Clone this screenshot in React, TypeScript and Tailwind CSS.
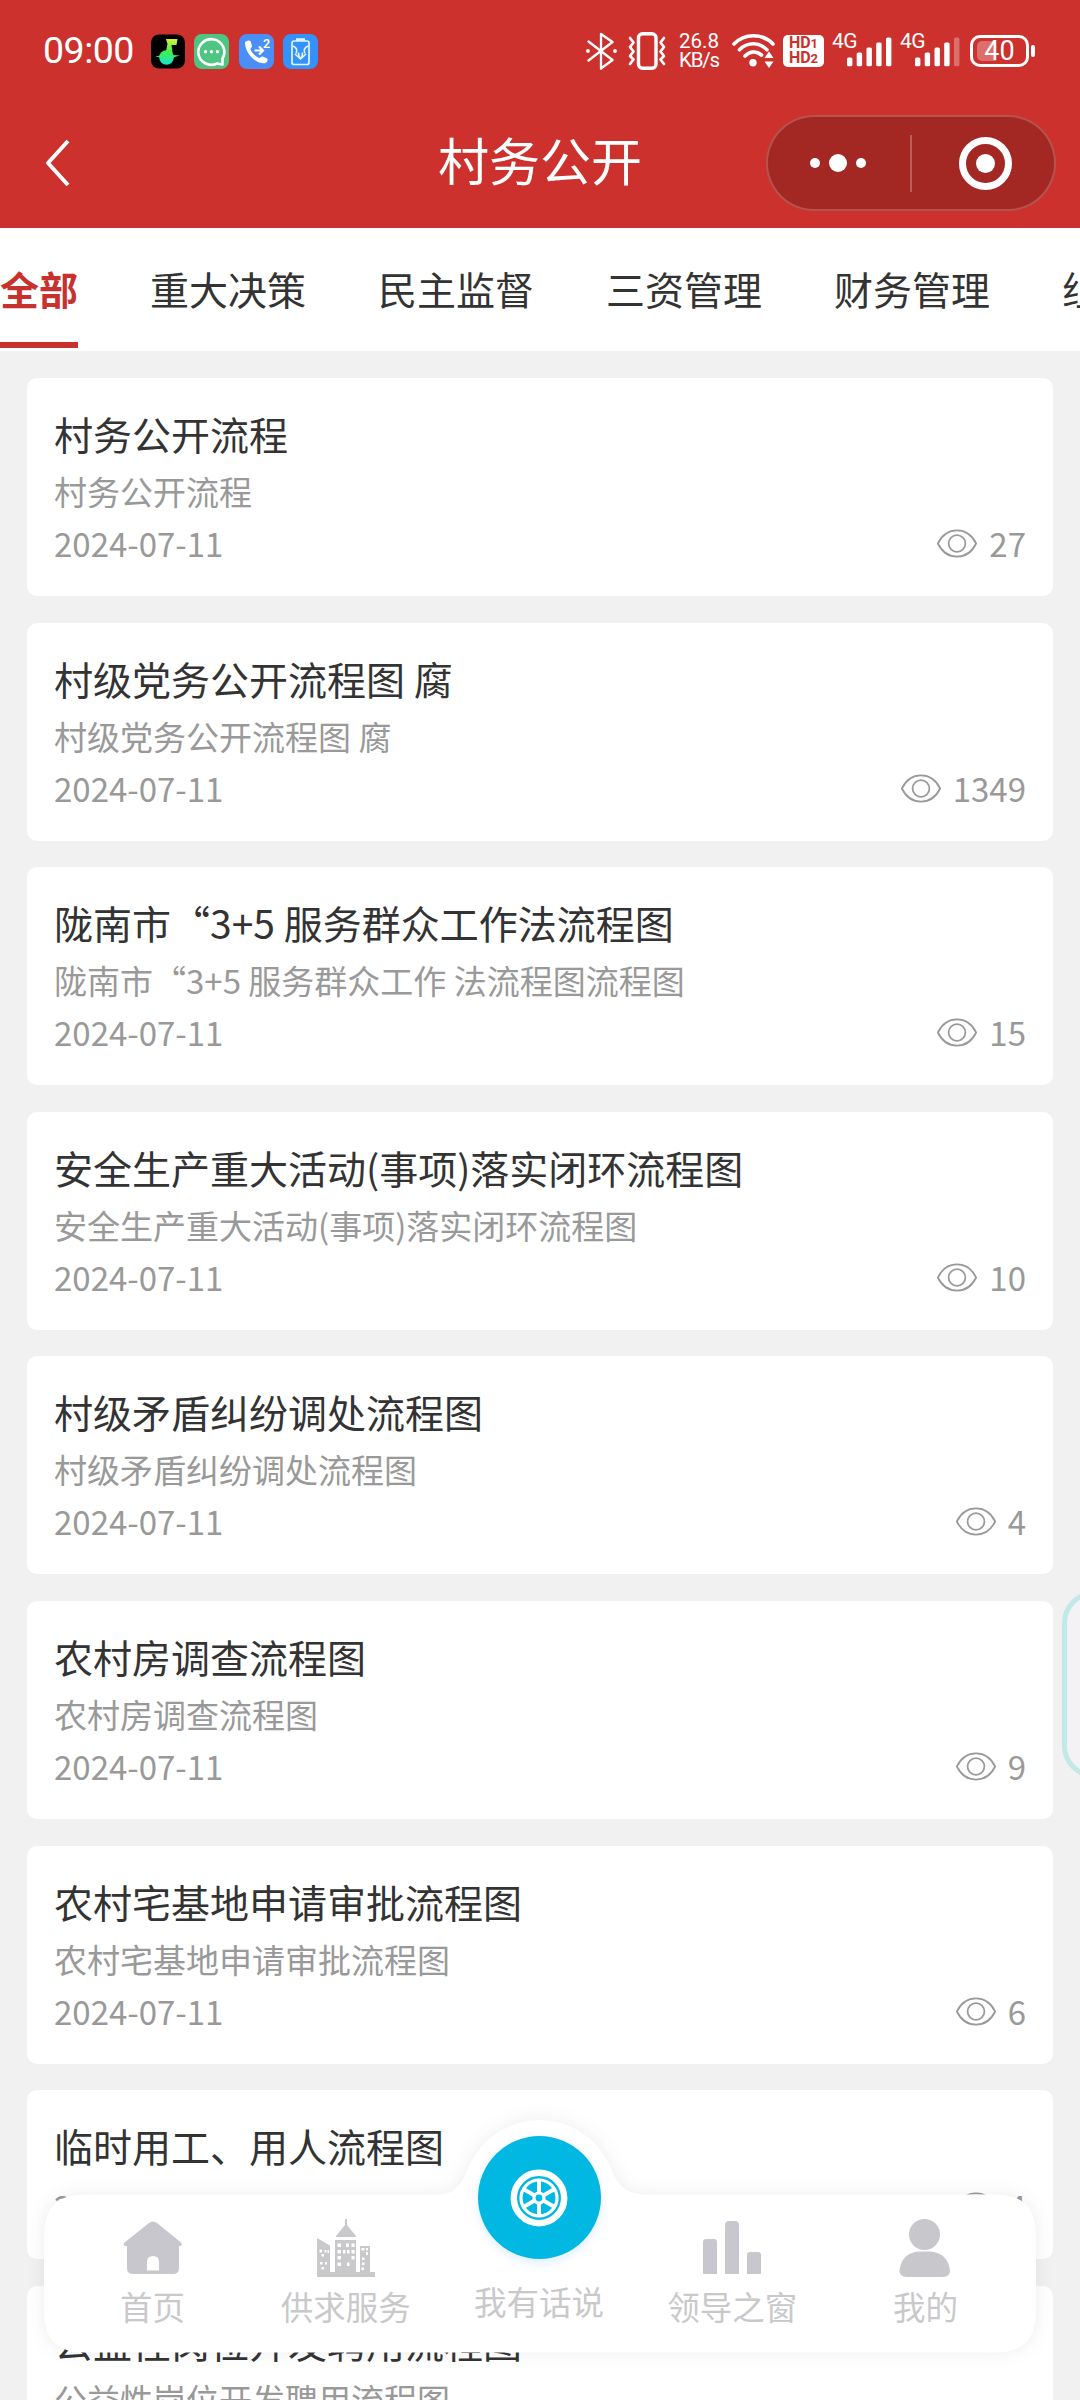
import React from "react";

type Item = { title: string; summary?: string; date: string; views: number };

const TABS = ["全部", "重大决策", "民主监督", "三资管理", "财务管理", "组织建设"];

const ITEMS: Item[] = [
  { title: "村务公开流程", summary: "村务公开流程", date: "2024-07-11", views: 27 },
  { title: "村级党务公开流程图 腐", summary: "村级党务公开流程图 腐", date: "2024-07-11", views: 1349 },
  { title: "陇南市“3+5 服务群众工作法流程图", summary: "陇南市“3+5 服务群众工作 法流程图流程图", date: "2024-07-11", views: 15 },
  { title: "安全生产重大活动(事项)落实闭环流程图", summary: "安全生产重大活动(事项)落实闭环流程图", date: "2024-07-11", views: 10 },
  { title: "村级矛盾纠纷调处流程图", summary: "村级矛盾纠纷调处流程图", date: "2024-07-11", views: 4 },
  { title: "农村房调查流程图", summary: "农村房调查流程图", date: "2024-07-11", views: 9 },
  { title: "农村宅基地申请审批流程图", summary: "农村宅基地申请审批流程图", date: "2024-07-11", views: 6 },
  { title: "临时用工、用人流程图", date: "2024-07-11", views: 4 },
  { title: "公益性岗位开发聘用流程图", summary: "公益性岗位开发聘用流程图", date: "2024-07-11", views: 5 },
];

function MusicIcon() {
  return (
    <svg width="34" height="35" viewBox="0 0 34 35">
      <defs>
        <linearGradient id="note" gradientUnits="userSpaceOnUse" x1="0" y1="5" x2="0" y2="31">
          <stop offset="0" stopColor="#d8f53a" />
          <stop offset="0.5" stopColor="#3df04a" />
          <stop offset="1" stopColor="#16e6d6" />
        </linearGradient>
      </defs>
      <rect y="0.5" width="34" height="34" rx="8" fill="#000" />
      <g fill="url(#note)">
        <path d="M15 5H26.500L25.500 11H20.500L22 22H14L16.500 10z" />
        <circle cx="15.500" cy="23.500" r="7.300" />
        <path d="M4 22.500L12 21H22L29 21.500L22 23.500H10z" />
      </g>
    </svg>
  );
}

function ChatIcon() {
  return (
    <svg width="35" height="35" viewBox="0 0 35 35">
      <rect width="35" height="35" rx="8" fill="#4fc582" />
      <path d="M28.500 24.500A13 12.800 0 1 0 23 29.500l5.500 1z" fill="none" stroke="#fff" strokeWidth="2.600" strokeLinejoin="round" />
      <g fill="#fff">
        <circle cx="11.500" cy="17.800" r="1.700" />
        <circle cx="17.500" cy="17.800" r="1.700" />
        <circle cx="23.500" cy="17.800" r="1.700" />
      </g>
    </svg>
  );
}

function CallIcon() {
  return (
    <svg width="35" height="35" viewBox="0 0 35 35">
      <rect width="35" height="35" rx="8" fill="#4a8ff8" />
      <path d="M6 8.500c0-1.500 4.500-3 5.500-1.500l1.500 5c.2 1-2 2.500-1.500 3.500 1.500 3.500 5 7 8.500 8.500 1 .4 2.500-2 3.700-1.500l4.500 2c1 .6 0 4-1.500 4.500C17 31 6 19 6 8.500z" fill="#fff" />
      <path d="M15.500 16.500h8M20 12.500l4 4-4 4" fill="none" stroke="#fff" strokeWidth="2.200" />
      <text x="24" y="13.500" fill="#fff" fontSize="12.500" fontWeight="600" fontFamily="Roboto, sans-serif">2</text>
    </svg>
  );
}

function BatteryAppIcon() {
  return (
    <svg width="35" height="35" viewBox="0 0 35 35">
      <rect width="35" height="35" rx="8" fill="#3492fb" />
      <rect x="9" y="7" width="17" height="23.500" rx="2" fill="none" stroke="#e3f4ff" strokeWidth="1.700" />
      <path d="M13 5.500h9" stroke="#e3f4ff" strokeWidth="2.500" />
      <path d="M10 12q5.500 2.500 3 7.500M25 12q-5.500 2.500-3 7.500M17.500 24.500q-2-1.500-2-6M17.500 24.500q2-1.500 2-6M12 20l5.500 5 5.500-5" fill="none" stroke="#e3f4ff" strokeWidth="1.600" />
    </svg>
  );
}

function BluetoothIcon() {
  return (
    <svg width="31" height="38" viewBox="0 0 31 38">
      <path d="M2.500 9.500l24 18.500-11.500 8.500V2l11.500 8-24 18.500" fill="none" stroke="#fff" strokeWidth="2.300" strokeLinejoin="round" strokeLinecap="round" />
      <circle cx="1.900" cy="19" r="1.900" fill="#fff" />
      <circle cx="29" cy="19" r="1.900" fill="#fff" />
    </svg>
  );
}

function VibrateIcon() {
  return (
    <svg width="38" height="38" viewBox="0 0 38 38">
      <rect x="10.500" y="1.700" width="17.500" height="34.500" rx="4" fill="none" stroke="#fff" strokeWidth="3.400" />
      <path d="M2 6l3.500 4.500L2 15l3.500 4.500L2 24l3.500 3.500L2 32M36 6l-3.500 4.500L36 15l-3.500 4.500L36 24l-3.500 3.500L36 32" fill="none" stroke="#fff" strokeWidth="2.700" strokeLinejoin="round" strokeLinecap="round" />
    </svg>
  );
}

function WifiIcon() {
  return (
    <svg width="43" height="36" viewBox="0 0 43 36">
      <g fill="none" stroke="#fff" strokeWidth="3.600" strokeLinecap="round">
        <path d="M2 11c10.500-11 28.500-11 39 0" />
        <path d="M7.500 16.800c8-8 19.500-8 27.500 0" />
        <path d="M13 23c5-5.200 11.500-5.200 16.500-1" />
      </g>
      <circle cx="21" cy="29.800" r="3.700" fill="#fff" />
      <path d="M37 18.500l4.500 6.500h-9zM37 35l4.500-6.500h-9z" fill="#fff" />
    </svg>
  );
}

function HdIcon() {
  return (
    <div className="flex h-[32px] w-[41px] flex-col items-center justify-center rounded-[5px] bg-white text-[16px] leading-[14px] font-bold text-[#cc312d]">
      <span>HD<span className="text-[13px]">1</span></span>
      <span>HD<span className="text-[13px]">2</span></span>
    </div>
  );
}

function Signal({ weak }: { weak?: boolean }) {
  return (
    <div className="relative h-[34px] w-[60px]">
      <span className="absolute top-0 left-0 text-[21px] leading-[15px] tracking-[-0.5px] text-white">4G</span>
      <svg width="60" height="34" viewBox="0 0 60 34" className="text-white" fill="currentColor">
        <rect x="15" y="23.500" width="5.400" height="8.800" rx="1.500" />
        <rect x="24.700" y="18.500" width="5.400" height="13.800" rx="1.500" />
        <rect x="34.500" y="13.500" width="5.400" height="18.800" rx="1.500" />
        <rect x="44.200" y="8.500" width="5.400" height="23.800" rx="1.500" />
        <rect x="54" y="3.500" width="5.400" height="28.800" rx="1.500" opacity={weak ? 0.3 : 1} />
      </svg>
    </div>
  );
}

function BatteryIcon() {
  return (
    <div className="flex items-center gap-[2px]">
      <div className="relative flex h-[32px] w-[59px] items-center justify-center rounded-[10px] border-[3px] border-white">
        <div className="absolute top-[3px] bottom-[3px] left-[4px] w-[19px] rounded-l-[5px] bg-white/30" />
        <span className="relative text-[27px] leading-none text-white">40</span>
      </div>
      <div className="h-[12px] w-[4px] rounded-full bg-white" />
    </div>
  );
}

function StatusBar() {
  return (
    <div className="flex h-[102px] items-center justify-between pr-[45px] pl-[43px] font-[Roboto,sans-serif]">
      <div className="flex items-center">
        <span className="w-[108px] text-[37.500px] leading-none tracking-[-0.500px] text-white">09:00</span>
        <div className="flex gap-[9.300px]">
          <MusicIcon />
          <ChatIcon />
          <CallIcon />
          <BatteryAppIcon />
        </div>
      </div>
      <div className="flex items-center">
        <BluetoothIcon />
        <div className="w-[11px]" />
        <VibrateIcon />
        <div className="w-[13px]" />
        <div className="w-[53px] text-[20.500px] leading-[19px] text-white">
          <div>26.8</div>
          <div className="tracking-[-1.200px]">KB/s</div>
        </div>
        <WifiIcon />
        <div className="w-[8px]" />
        <HdIcon />
        <div className="w-[8px]" />
        <Signal />
        <div className="w-[8px]" />
        <Signal weak />
        <div className="w-[10px]" />
        <BatteryIcon />
      </div>
    </div>
  );
}

function NavBar() {
  return (
    <div className="relative flex h-[122px] items-center justify-between pr-[24px] pl-[44px]">
      <svg width="28" height="48" viewBox="0 0 28 48">
        <path d="M24 2L4 24l20 22" fill="none" stroke="#fff" strokeWidth="4" strokeLinejoin="round" />
      </svg>
      <h1 className="absolute inset-x-0 top-[21px] text-center text-[51px] leading-[73px] text-white">村务公开</h1>
      <div className="flex h-[96px] w-[290px] items-center rounded-full border-2 border-white/20 bg-[#a32823]">
        <div className="flex w-[140px] items-center justify-center gap-[9px]">
          <span className="size-[10px] rounded-full bg-white" />
          <span className="size-[18px] rounded-full bg-white" />
          <span className="size-[10px] rounded-full bg-white" />
        </div>
        <div className="ml-[2px] h-[57px] w-[2px] bg-white/25" />
        <div className="flex flex-1 justify-center pl-[4px]">
          <span className="flex size-[53px] items-center justify-center rounded-full border-[7px] border-white">
            <span className="size-[19px] rounded-full bg-white" />
          </span>
        </div>
      </div>
    </div>
  );
}

function TabBar() {
  return (
    <div className="flex h-[123px] gap-[72px] overflow-hidden bg-white pb-[3px] text-[39px] text-[#333]">
      {TABS.map((t, i) =>
        i === 0 ? (
          <div key={t} className="flex shrink-0 items-center border-b-[6px] border-[#c7322f] pt-[6px] font-bold text-[#c7322f]">
            {t}
          </div>
        ) : (
          <div key={t} className="flex shrink-0 items-center">{t}</div>
        ),
      )}
    </div>
  );
}

function EyeIcon() {
  return (
    <svg width="42" height="29" viewBox="0 0 42 30" fill="none" stroke="#999" strokeWidth="1.800">
      <path d="M1.200 15C10-3 32-3 40.800 15 32 33 10 33 1.200 15z" strokeLinejoin="round" />
      <circle cx="21" cy="15" r="8.700" />
    </svg>
  );
}

function Card({ item }: { item: Item }) {
  return (
    <div className="flex flex-col rounded-[10px] bg-white px-[27px] pt-[27px] pb-[27px]">
      <div className="h-[56px] text-[39px] leading-[56px] whitespace-nowrap text-[#333]">{item.title}</div>
      {item.summary && (
        <div className="mt-[8px] h-[41px] text-[33px] leading-[44px] whitespace-nowrap text-[#999]">{item.summary}</div>
      )}
      <div className="mt-[8px] flex h-[51px] items-center justify-between text-[33px] leading-[51px] text-[#999]">
        <span>{item.date}</span>
        <span className="flex items-center gap-[11px]">
          <EyeIcon />
          {item.views}
        </span>
      </div>
    </div>
  );
}

function HomeIcon() {
  return (
    <svg width="60" height="54" viewBox="0 0 60 54">
      <path fillRule="evenodd" d="M26 2Q30-1 34 2L58 21.500q2 3-1 3.500h-1v22q0 6-6 6H10q-6 0-6-6V25H2q-2.500-1-.5-3.500zM24 49.500h12V41q0-6-6-6t-6 6z" fill="#c8c7cd" />
    </svg>
  );
}

function CityIcon() {
  return (
    <svg width="58" height="58" viewBox="0 0 58 58">
      <path d="M28 0h2v6l9 11v1H19v-1l9-11zM0 19l13 7.500V53h5V21h21v32h4V27h10v26h5v5H0z" fill="#c9c9cb" />
      <g fill="#fff">
        <path d="M2.500 30.500h2.500v3H2.500zM7.500 31h2v2.500h-2zM10.500 31h1.500v3h-1.500zM4.500 35h2.500v2.500H4.500zM3 43h2.500v2.500H3zM8 43h2v2.500H8zM4.500 48h2.500v2.500H4.500z" />
        <path d="M20.500 24.500h3.500v3.500h-3.500zM29 24.500h3v3.500h-3zM34.500 24.500h3v3.500h-3zM20.500 31h3.500v3.500h-3.500zM26 31h2.500v3.500H26zM30 31h2.500v3.500H30zM34.500 31h3v3.500h-3zM20.500 37h3.500v3.500h-3.500zM34.500 37h3v3.500h-3zM20.500 43.500h3.500v3.500h-3.500zM30 43.500h2.500v3.500H30z" />
        <path d="M44.500 29h3v2.500h-3zM49 29h2v2.500h-2zM49 33h2v3h-2zM45 38.500h2.500v2.500H45zM45 43.500h2.500v2.500H45zM44.500 48.500h2.500v2.500h-2.500z" />
      </g>
    </svg>
  );
}

function BarsIcon() {
  return (
    <svg width="58" height="53" viewBox="0 0 58 53" fill="#c8c7cd">
      <path d="M0 53V21q0-3 3-3h8q3 0 3 3v32zM22 53V4q0-4 4-4h6q4 0 4 4v49zM44 53V34q0-3 3-3h8q3 0 3 3v19z" />
    </svg>
  );
}

function PersonIcon() {
  return (
    <svg width="52" height="58" viewBox="0 0 52 58" fill="#c8c7cc">
      <circle cx="25.500" cy="15.500" r="15.500" />
      <path d="M19 32.500h13q17 2 19 19 0 6.500-7 6.500H7.500Q.5 58 .5 51.500 2.500 34.500 19 32.500z" />
    </svg>
  );
}

function WheelIcon() {
  return (
    <svg width="58" height="58" viewBox="-29 -29 58 58" fill="none" stroke="#fff">
      <circle r="25.200" strokeWidth="6.500" />
      <circle r="18" strokeWidth="3.200" />
      <circle r="5" strokeWidth="3.200" />
      {[0, 60, 120, 180, 240, 300].map((a) => (
        <path key={a} d="M0-5.500V-17" strokeWidth="4" transform={`rotate(${a})`} />
      ))}
    </svg>
  );
}

function NavItem({ icon, label }: { icon: React.ReactNode; label: string }) {
  return (
    <div className="flex flex-1 flex-col items-center pt-[48.500px]">
      <div className="flex h-[58px] items-center">{icon}</div>
      <span className="mt-[6px] text-[32.500px] leading-[46px] text-[#c9c9cb]">{label}</span>
    </div>
  );
}

/* Floating bottom bar; the backdrop shape carries a rounded bump under the centre button. */
function BottomNav() {
  return (
    <nav className="absolute top-[2170px] left-[44px] w-[992px]">
      <svg width="992" height="260" viewBox="0 -50 992 260" className="absolute -top-[50px] left-0 overflow-visible drop-shadow-[0_0_9px_rgba(60,60,90,0.09)]">
        <path d="M40 24.500H396Q413 24 421 5 426-7 428-10A77 77 0 0 1 563-10Q565-7 570 5 578 24 600 24.500H952Q992 24.500 992 64.500V142.500Q992 182.500 952 182.500H40Q0 182.500 0 142.500V64.500Q0 24.500 40 24.500z" fill="#fff" />
      </svg>
      <div className="relative flex pr-[14px] pl-[12px]">
        <NavItem icon={<HomeIcon />} label="首页" />
        <NavItem icon={<CityIcon />} label="供求服务" />
        <div className="flex flex-1 flex-col items-center">
          <div className="-mt-[34px] flex size-[123px] items-center justify-center rounded-full bg-[#00b8e2] shadow-[0_4px_10px_rgba(0,120,255,0.13)]">
            <WheelIcon />
          </div>
          <span className="mt-[19px] text-[32.500px] leading-[46px] text-[#c9c9cb]">我有话说</span>
        </div>
        <NavItem icon={<BarsIcon />} label="领导之窗" />
        <NavItem icon={<PersonIcon />} label="我的" />
      </div>
    </nav>
  );
}

export default function App() {
  return (
    <div className="relative h-[2400px] w-[1080px] overflow-hidden bg-[#f1f1f1] font-['Noto_Sans_CJK_SC',sans-serif]">
      <header className="h-[228px] bg-[#cc312d]">
        <StatusBar />
        <NavBar />
      </header>
      <TabBar />
      <main className="flex flex-col gap-[26.600px] px-[27px] pt-[27px]">
        {ITEMS.map((item) => (
          <Card key={item.title} item={item} />
        ))}
      </main>
      <div className="absolute top-[1591px] left-[1062px] h-[187px] w-[80px] rounded-[32px] border-[5px] border-[#c0e9e7] bg-[#f4f2f5]" />
      <BottomNav />
    </div>
  );
}
